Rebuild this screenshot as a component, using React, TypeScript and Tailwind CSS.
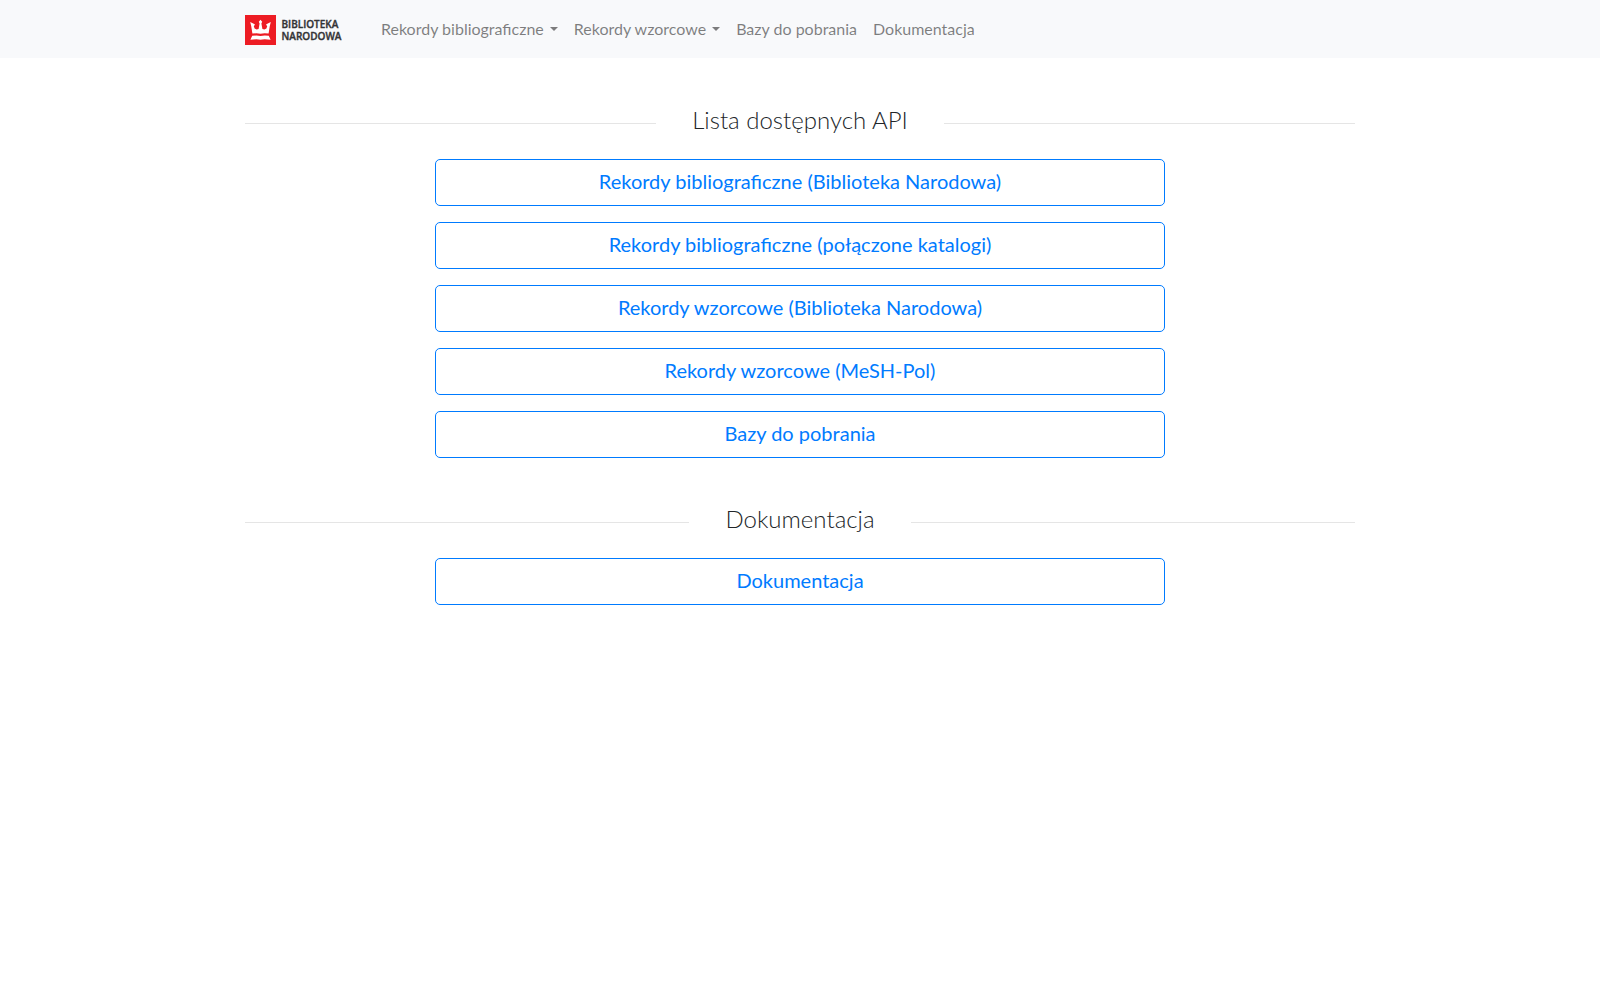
const apiLinks = [
  { label: "Rekordy bibliograficzne (Biblioteka Narodowa)", href: "#bibs" },
  { label: "Rekordy bibliograficzne (połączone katalogi)", href: "#networks-bibs" },
  { label: "Rekordy wzorcowe (Biblioteka Narodowa)", href: "#authorities" },
  { label: "Rekordy wzorcowe (MeSH-Pol)", href: "#mesh-pol" },
  { label: "Bazy do pobrania", href: "#databases" },
];

const docLinks = [{ label: "Dokumentacja", href: "#docs" }];

const navCls = "flex items-center px-2 py-2 text-base leading-6 text-black/50 hover:text-black/70";

function Logo() {
  return (
    <svg width="96" height="30" viewBox="0 0 96 30" role="img" aria-label="Biblioteka Narodowa" className="overflow-visible">
      <rect width="31" height="30" fill="#ed1c24" />
      <g fill="#fff">
        <path d="M15.5 4.8 L17.2 6.8 L16.4 8.4 L17.4 14 L19.4 14.4 L21.4 13.4 L22.2 11.2 L21 9.4 L22.8 8.4 L25.8 7 L24.8 11 L23.6 18.6 Q18.6 18 15.5 18.8 Q12.4 18 7.4 18.6 L6.2 11 L5.2 7 L8.2 8.4 L10 9.4 L8.8 11.2 L9.6 13.4 L11.6 14.4 L13.6 14 L14.6 8.4 L13.8 6.8 Z" />
        <path d="M7.2 20.8 Q12.4 20.2 15.5 21 Q18.6 20.2 23.8 20.8 L25.6 24.8 Q19 23.8 15.5 24.8 Q12 23.8 5.4 24.8 Z" />
      </g>
      <g
        fill="#333335"
        stroke="#333335"
        strokeWidth="0.35"
        fontFamily="'Open Sans', 'Noto Sans', sans-serif"
        fontWeight="600"
        fontSize="10"
      >
        <text x="36.5" y="13">BIBLIOTEKA</text>
        <text x="36.5" y="25">NARODOWA</text>
      </g>
    </svg>
  );
}

function Caret() {
  return <span className="ml-1.5 border-x-4 border-t-4 border-x-transparent border-t-current"></span>;
}

function Section({ title, links }: { title: string; links: { label: string; href: string }[] }) {
  return (
    <section>
      <div className="flex items-center">
        <hr className="mt-1.5 grow border-black/10" />
        <h2 className="px-9 text-2xl leading-7 font-light">{title}</h2>
        <hr className="mt-1.5 grow border-black/10" />
      </div>
      <div className="mx-auto mt-[25px] flex max-w-[730px] flex-col gap-4">
        {links.map((l) => (
          <a
            key={l.href}
            href={l.href}
            className="rounded-[5px] border border-[#007bff] px-3 pt-[7px] pb-[9px] text-center text-xl leading-[29px] text-[#007bff] hover:bg-[#007bff] hover:text-white"
          >
            {l.label}
          </a>
        ))}
      </div>
    </section>
  );
}

export default function App() {
  return (
    <div className="min-h-screen bg-white font-['Lato',sans-serif] text-[#212529]">
      <nav className="bg-[#f8f9fb] py-[9px]">
        <div className="mx-auto flex max-w-[1140px] items-center px-[15px]">
          <a href="#home" className="mr-8 pt-0.5">
            <Logo />
          </a>
          <button type="button" className={navCls}>
            Rekordy bibliograficzne
            <Caret />
          </button>
          <button type="button" className={navCls}>
            Rekordy wzorcowe
            <Caret />
          </button>
          <a href="#databases" className={navCls}>Bazy do pobrania</a>
          <a href="#docs" className={navCls}>Dokumentacja</a>
        </div>
      </nav>

      <main className="mx-auto flex max-w-[1140px] flex-col gap-[47px] px-[15px] py-12">
        <Section title="Lista dostępnych API" links={apiLinks} />
        <Section title="Dokumentacja" links={docLinks} />
      </main>
    </div>
  );
}
